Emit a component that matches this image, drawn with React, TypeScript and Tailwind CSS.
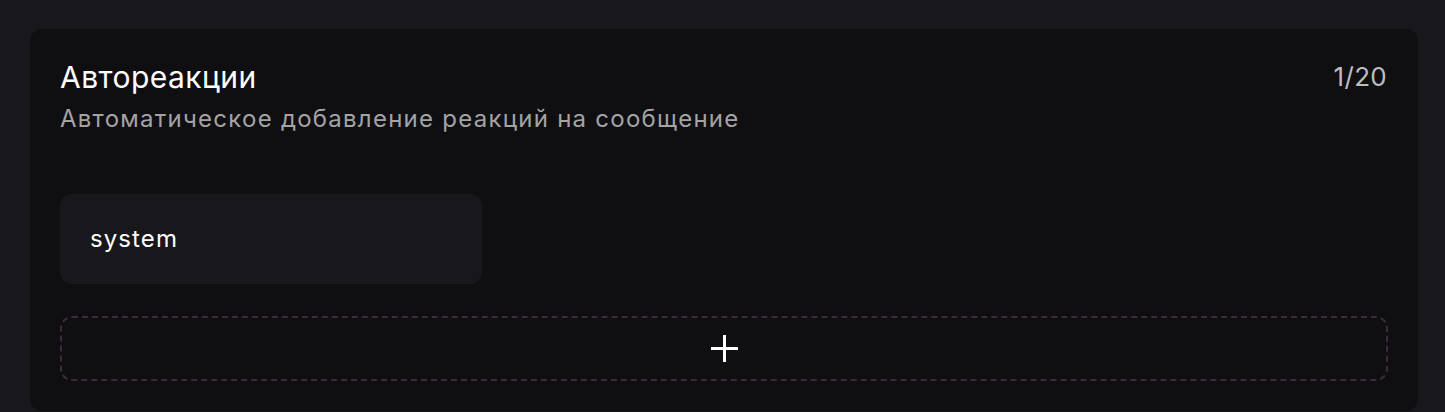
export default function App() {
    const reactions = ['system'];

    return (
        <div className="min-h-screen w-full bg-[#18181c] pt-[29px] pl-[30px] pr-[27px] pb-[1px]" style={{ fontFamily: 'Inter, "Noto Sans", sans-serif' }}>
            {/* Card */}
            <div className="rounded-[12px] bg-[#0f0f11] px-[30px] pt-[30px] pb-[30px]">
                {/* Header */}
                <div className="flex items-start justify-between">
                    <div>
                        <h2 className="text-[30px] leading-[36px] font-normal tracking-[0.45px] text-white">Автореакции</h2>
                        <p className="mt-[6px] text-[24px] leading-[36px] tracking-[1.25px] text-[#a3a3a6]">
                            Автоматическое добавление реакций на сообщение
                        </p>
                    </div>
                    <span className="text-[26px] leading-[36px] tracking-[0.3px] text-[#bdbdc0] pr-[1px]">1/20</span>
                </div>

                {/* Reactions grid */}
                <div className="mt-[57px] grid grid-cols-[422px] gap-4">
                    {reactions.map(name => (
                        <div key={name} className="h-[90px] rounded-[12px] bg-[#18181c] px-[30px] flex items-center">
                            <span className="text-[24px] tracking-[1.1px] text-white">{name}</span>
                        </div>
                    ))}
                </div>

                {/* Add button */}
                <button className="mt-[32px] w-full h-[65px] rounded-[12px] border-2 border-dashed border-[#3a2b3c] flex items-center justify-center">
                    <svg width="27" height="27" viewBox="0 0 27 27" className="text-white">
                        <path d="M13.5 0V27M0 13.5H27" stroke="currentColor" strokeWidth="3" />
                    </svg>
                </button>
            </div>
        </div>
    );
}
